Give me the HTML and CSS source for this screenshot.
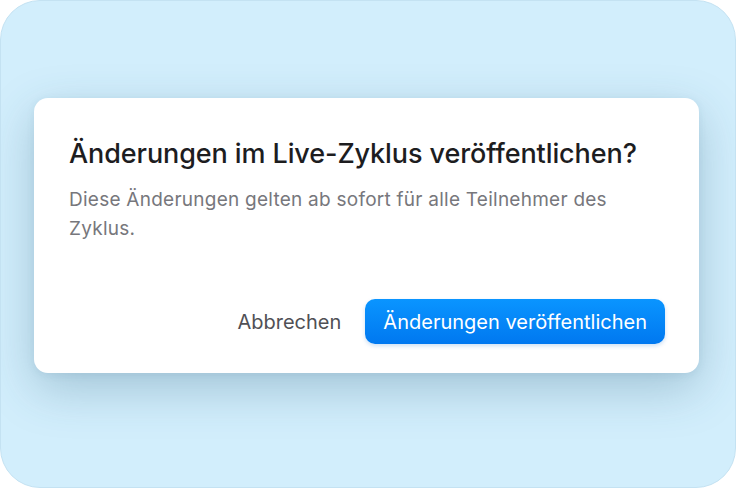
FILE: index.html
```html
<!DOCTYPE html>
<html lang="de">
<head>
<meta charset="utf-8">
<link rel="stylesheet" href="styles.css">
</head>
<body>
<div class="frame">
  <div class="dialog">
    <h1 class="title">Änderungen im Live-Zyklus veröffentlichen?</h1>
    <p class="message">Diese Änderungen gelten ab sofort für alle Teilnehmer des Zyklus.</p>
    <div class="actions">
      <button class="btn btn-cancel">Abbrechen</button>
      <button class="btn btn-primary">Änderungen veröffentlichen</button>
    </div>
  </div>
</div>
</body>
</html>
```
FILE: styles.css
```css
html, body {
  margin: 0;
  padding: 0;
  background: #ffffff;
}
body {
  width: 736px;
  height: 488px;
  font-family: Inter, "Noto Sans", sans-serif;
}
.frame {
  box-sizing: border-box;
  width: 736px;
  height: 488px;
  border: 1px solid #c4e2f2;
  border-radius: 40px;
  background: #d2eefc;
  padding: 97px 0 0 33px;
  overflow: hidden;
}
.dialog {
  box-sizing: border-box;
  width: 665px;
  height: 275px;
  background: #ffffff;
  border-radius: 14px;
  padding: 39px 34px 0 35px;
  box-shadow: 0 16px 48px rgba(40, 90, 120, 0.28), 0 2px 8px rgba(40, 90, 120, 0.08);
}
.title {
  margin: 0;
  font-size: 27px;
  line-height: 34px;
  font-weight: 500;
  color: #1d1d1f;
  letter-spacing: -0.1px;
}
.message {
  margin: 14px 0 0;
  max-width: 560px;
  font-size: 19px;
  line-height: 29px;
  color: #77777c;
  letter-spacing: 0.25px;
}
.actions {
  display: flex;
  justify-content: flex-end;
  align-items: center;
  gap: 24px;
  margin-top: 56px;
}
.btn {
  font-family: inherit;
  font-size: 20px;
  border: none;
  cursor: pointer;
}
.btn-cancel {
  background: none;
  color: #505055;
  padding: 0;
}
.btn-primary {
  height: 45px;
  padding: 0 18px;
  border-radius: 10px;
  color: #ffffff;
  background: linear-gradient(#0a95ff, #0078f0);
  box-shadow: 0 2px 4px rgba(0, 100, 200, 0.2);
}
```
